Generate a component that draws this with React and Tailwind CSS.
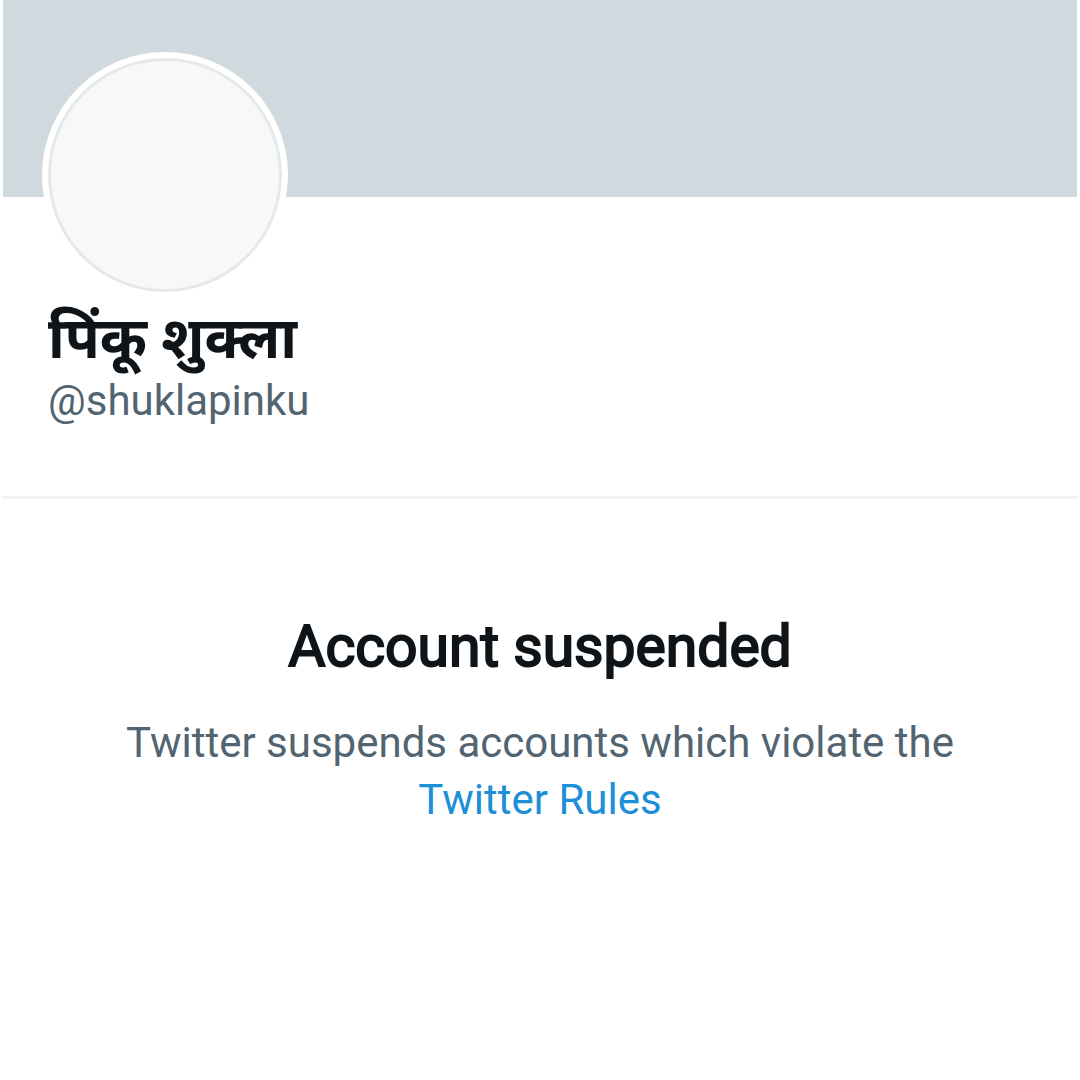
export default function App() {
  return (
    <main className="min-h-screen bg-white px-[3px] font-['Roboto','Noto_Sans',sans-serif] text-[#0f1419]">
      <header className="border-b-3 border-[#eff3f4] pb-[67px]">
        <div className="h-[197px] bg-[#cfd9de]" />
        <div className="px-[45px]">
          <div className="relative -mt-[145px] -ml-[6px] size-[246px] rounded-full bg-white p-[6px]">
            <div className="size-full rounded-full border-3 border-[#e5e9ea] bg-[#f7f9f9]" />
          </div>
          <h1 className="mt-[7px] text-[57px] leading-[68px] font-bold">पिंकू शुक्ला</h1>
          <p className="text-[42px] leading-[56px] text-[#536471]">@shuklapinku</p>
        </div>
      </header>
      <section className="px-24 pt-[112px] text-center">
        <h2 className="text-[57px] leading-[72px] font-normal [-webkit-text-stroke:2px_#0f1419]">Account suspended</h2>
        <p className="mt-[31px] text-[42px] leading-[57px] text-[#536471]">
          Twitter suspends accounts which violate the{" "}
          <a href="#rules" className="text-[#1d8fd6]">Twitter Rules</a>
        </p>
      </section>
    </main>
  );
}
